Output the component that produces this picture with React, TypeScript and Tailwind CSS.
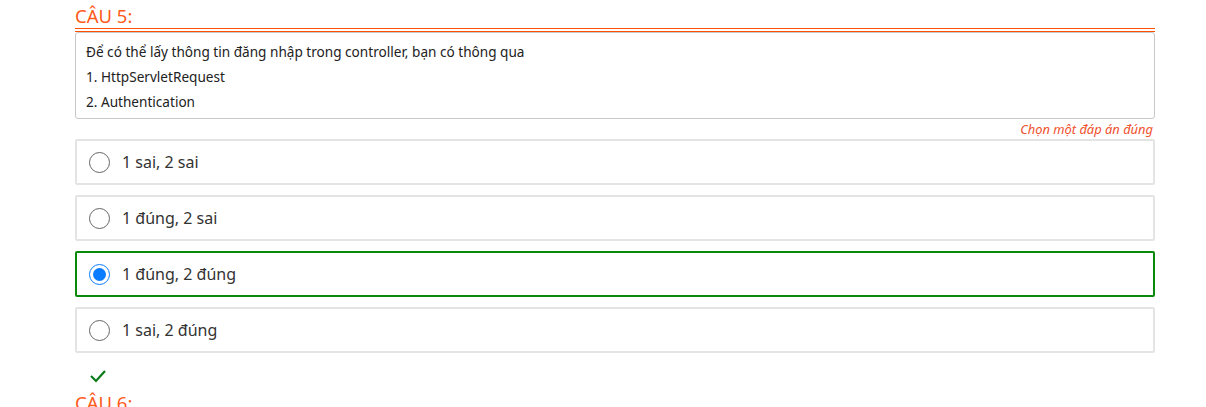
import React from "react";

const options = [
  { id: 1, label: "1 sai, 2 sai", checked: false },
  { id: 2, label: "1 đúng, 2 sai", checked: false },
  { id: 3, label: "1 đúng, 2 đúng", checked: true },
  { id: 4, label: "1 sai, 2 đúng", checked: false },
];

function Radio({ checked }: { checked: boolean }) {
  if (checked) {
    return (
      <span className="flex h-[21px] w-[21px] items-center justify-center rounded-full border-[1.5px] border-[#0a7cff] bg-white">
        <span className="h-[13px] w-[13px] rounded-full bg-[#0a7cff]" />
      </span>
    );
  }
  return <span className="h-[21px] w-[21px] rounded-full border border-[#666] bg-white" />;
}

export default function App() {
  return (
    <div className="min-h-[407px] bg-white font-['Noto_Sans',sans-serif]">
      <div className="ml-[75px] w-[1080px] pt-[4px]">
        <div className="h-[24px] text-[18.5px] leading-[24px] text-[#ff5a1a]">CÂU 5:</div>
        <div className="h-[4px] border-y border-[#ff5000]" />
        <div className="rounded-[3px] border border-[#c8c8c8] pb-[4px] pl-[10px] pt-[6px] text-[13.6px] leading-[25px] text-[#222]">
          <p>Để có thể lấy thông tin đăng nhập trong controller, bạn có thông qua</p>
          <p>1. HttpServletRequest</p>
          <p>2. Authentication</p>
        </div>
        <div className="h-[20px] pr-[2px] text-right text-[12.9px] italic leading-[20px] text-[#f0502d]">
          Chọn một đáp án đúng
        </div>
        <div className="flex flex-col gap-[10px]">
          {options.map((o) => (
            <div
              key={o.id}
              className={
                o.checked
                  ? "flex h-[46px] items-center gap-[12px] rounded-[2px] border-2 border-[#0a8a0a] pl-[12px] text-[16px] text-[#333]"
                  : "flex h-[46px] items-center gap-[12px] rounded-[2px] border-2 border-[#e4e4e4] pl-[12px] text-[16px] text-[#333]"
              }
            >
              <Radio checked={o.checked} />
              <span>{o.label}</span>
            </div>
          ))}
        </div>
        <div className="flex h-[38px] items-center pl-[14px] pt-[8px]">
          <svg width="18" height="14" viewBox="0 0 18 14" fill="none">
            <path d="M2 7l5 5L16 2" stroke="#0a7a1a" strokeWidth="2.2" />
          </svg>
        </div>
        <div className="text-[18.5px] leading-[24px] text-[#ff5a1a]">CÂU 6:</div>
      </div>
    </div>
  );
}
